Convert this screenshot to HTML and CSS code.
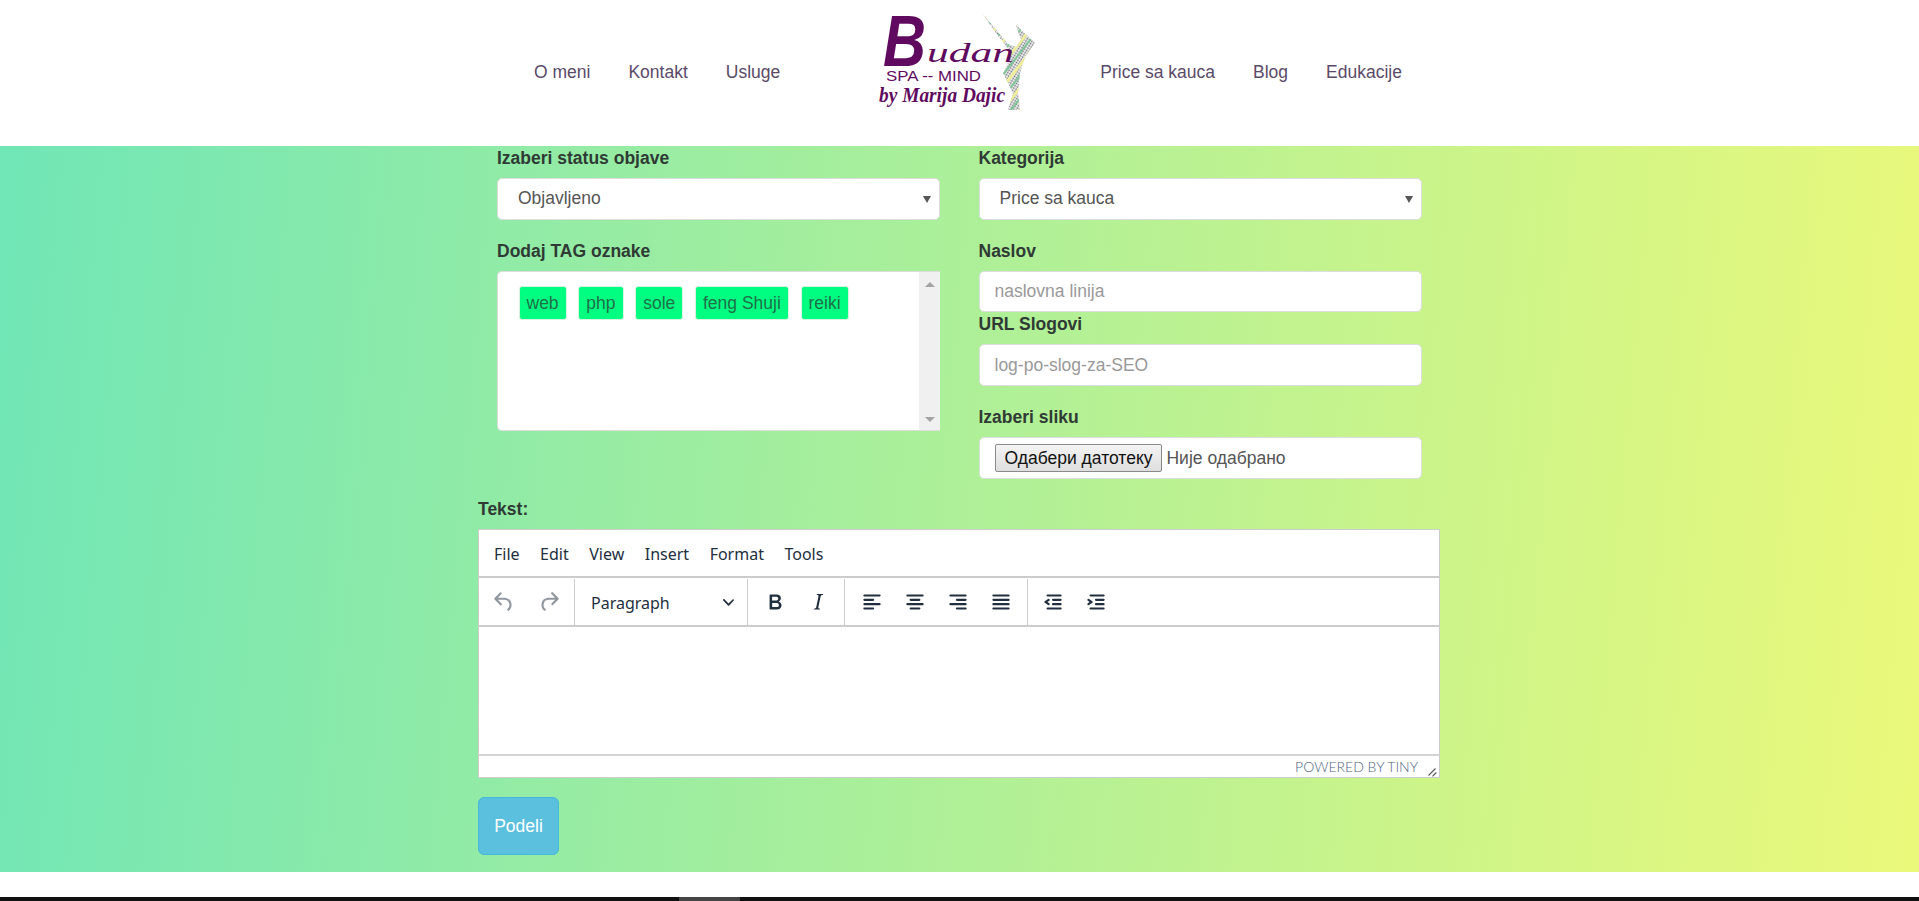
FILE: index.html
```html
<!DOCTYPE html>
<html>
<head>
  <meta charset="utf-8">
  <title>Budan - Nova objava</title>
  <meta content="width=device-width, initial-scale=1" name="viewport">
  <link rel="stylesheet" href="styles.css">
</head>
<body>
  <!-- Header -->
  <header class="site-header">
    <nav class="nav-group">
      <a href="#">O meni</a>
      <a href="#">Kontakt</a>
      <a href="#">Usluge</a>
    </nav>
    <a class="logo" href="#">
      <svg width="240" height="125" viewBox="0 0 240 125">
        <defs>
          <pattern id="dots" width="2.6" height="2.6" patternUnits="userSpaceOnUse" patternTransform="rotate(30)">
            <rect width="2.6" height="2.6" fill="#f4f4f0"></rect>
            <circle cx="1.3" cy="1.3" r="0.85" fill="#6a6c7c"></circle>
          </pattern>
          <pattern id="bands" width="14" height="14" patternUnits="userSpaceOnUse" patternTransform="rotate(-52)">
            <rect width="14" height="3" fill="#f0ee9a"></rect>
            <rect y="7" width="14" height="2" fill="#7fc79a"></rect>
          </pattern>
        </defs>
        <path class="dancer" d="M144 13L158 33L173 52L170 63L165 73L175 93L170 110L182 110L180 93L182 73L187 57L197 43L178 25L183 40L178 47L170 44L160 32Z" fill="url(#dots)"></path>
        <path class="dancer" d="M144 13L158 33L173 52L170 63L165 73L175 93L170 110L182 110L180 93L182 73L187 57L197 43L178 25L183 40L178 47L170 44L160 32Z" fill="url(#bands)"></path>
        <text class="logo-b" x="45" y="66" textLength="43" lengthAdjust="spacingAndGlyphs">B</text>
        <text class="logo-udan" x="89" y="62" textLength="87" lengthAdjust="spacingAndGlyphs">udan</text>
        <text class="logo-spa" x="48" y="81" textLength="95" lengthAdjust="spacingAndGlyphs">SPA -- MIND</text>
        <text class="logo-by" x="41" y="102" textLength="126" lengthAdjust="spacingAndGlyphs">by Marija Dajic</text>
      </svg>
    </a>
    <nav class="nav-group">
      <a href="#">Price sa kauca</a>
      <a href="#">Blog</a>
      <a href="#">Edukacije</a>
    </nav>
  </header>

  <!-- Post form -->
  <main class="page">
    <form class="post-form">
      <div class="form-cols">
        <div class="col">
          <label class="field-label">Izaberi status objave</label>
          <div class="control select-box">Objavljeno</div>
          <label class="field-label">Dodaj TAG oznake</label>
          <div class="tag-box">
            <div class="tag-list">
              <span class="tag">web</span>
              <span class="tag">php</span>
              <span class="tag">sole</span>
              <span class="tag">feng Shuji</span>
              <span class="tag">reiki</span>
            </div>
            <div class="scroll-track">
              <span class="scroll-up"></span>
              <span class="scroll-down"></span>
            </div>
          </div>
        </div>
        <div class="col">
          <label class="field-label">Kategorija</label>
          <div class="control select-box">Price sa kauca</div>
          <label class="field-label">Naslov</label>
          <input class="control text-input tight" type="text" placeholder="naslovna linija">
          <label class="field-label">URL Slogovi</label>
          <input class="control text-input" type="text" placeholder="log-po-slog-za-SEO">
          <label class="field-label">Izaberi sliku</label>
          <div class="control file-box">
            <button class="file-btn" type="button">Одабери датотеку</button>
            <span>Није одабрано</span>
          </div>
        </div>
      </div>

      <label class="field-label">Tekst:</label>
      <div class="editor">
        <div class="menu-bar">
          <span>File</span>
          <span>Edit</span>
          <span>View</span>
          <span>Insert</span>
          <span>Format</span>
          <span>Tools</span>
        </div>
        <div class="tool-bar">
          <div class="tb-group tb-history">
            <span class="tool disabled"><svg width="26" height="26" viewBox="0 0 24 24"><path d="M6.4 8H12c3.7 0 6.2 2 6.8 5.1.6 2.7-.4 5.6-2.3 6.8a1 1 0 0 1-1-1.8c1.1-.6 1.8-2.7 1.4-4.6-.5-2.1-2.1-3.500-4.900-3.500H6.400l3.300 3.300a1 1 0 1 1-1.400 1.400l-5-5a1 1 0 0 1 0-1.400l5-5a1 1 0 0 1 1.400 1.400L6.400 8z"></path></svg></span>
            <span class="tool disabled"><svg width="26" height="26" viewBox="0 0 24 24"><path d="M17.600 10H12c-2.800 0-4.400 1.400-4.900 3.500-.4 2 .3 4 1.400 4.600a1 1 0 1 1-1 1.800c-2-1.200-2.900-4.100-2.300-6.800.6-3 3-5.100 6.800-5.100h5.600l-3.300-3.300a1 1 0 1 1 1.400-1.400l5 5a1 1 0 0 1 0 1.400l-5 5a1 1 0 0 1-1.400-1.400l3.300-3.300z"></path></svg></span>
          </div>
          <div class="tb-group tb-format">
            <span class="format-name">Paragraph</span>
            <svg width="11" height="11" viewBox="0 0 10 10"><path d="M8.700 2.200c.3-.3.8-.3 1 0 .4.2.4.7 0 1L5.700 7.800c-.3.3-.9.3-1.200 0L.2 3.200c-.3-.3-.3-.8 0-1.100.3-.2.8-.3 1.100 0L5 6l3.700-3.800z"></path></svg>
          </div>
          <div class="tb-group">
            <span class="tool"><svg width="26" height="26" viewBox="0 0 24 24"><path fill-rule="evenodd" d="M7.800 19c-.3 0-.5 0-.6-.2l-.2-.5V5.700c0-.2 0-.4.2-.5l.6-.2h5c1.500 0 2.700.3 3.500 1 .7.6 1.100 1.400 1.100 2.500a3 3 0 0 1-.6 1.900c-.4.6-1 1-1.600 1.200.4.1.9.3 1.300.6s.8.7 1 1.200c.4.4.5 1 .5 1.600 0 1.300-.4 2.300-1.300 3-.8.7-2.100 1-3.800 1H7.800zm5-8.300c.6 0 1.200-.1 1.600-.5.4-.3.6-.7.6-1.300 0-1.100-.8-1.700-2.300-1.700H9.300v3.500h3.500zm.5 6c.7 0 1.300-.1 1.700-.4.4-.4.6-.9.6-1.500s-.2-1-.7-1.400c-.4-.3-1-.4-2-.4H9.400v3.700h3.900z"></path></svg></span>
            <span class="tool"><svg width="26" height="26" viewBox="0 0 24 24"><path d="M16.700 4.700l-.1.900h-.3c-.6 0-1 0-1.400.3-.3.3-.4.6-.5 1.100l-2.100 9.800v.6c0 .5.4.8 1.400.8h.2l-.2.8H8l.2-.8h.2c1.100 0 1.800-.5 2-1.500l2-9.800.1-.5c0-.6-.4-.8-1.400-.8h-.3l.2-.9h5.800z"></path></svg></span>
          </div>
          <div class="tb-group">
            <span class="tool"><svg width="26" height="26" viewBox="0 0 24 24"><path d="M5 5h14a1 1 0 0 1 0 2H5a1 1 0 1 1 0-2zm0 4h8a1 1 0 0 1 0 2H5a1 1 0 1 1 0-2zm0 8h8a1 1 0 0 1 0 2H5a1 1 0 0 1 0-2zm0-4h14a1 1 0 0 1 0 2H5a1 1 0 0 1 0-2z"></path></svg></span>
            <span class="tool"><svg width="26" height="26" viewBox="0 0 24 24"><path d="M5 5h14a1 1 0 0 1 0 2H5a1 1 0 1 1 0-2zm3 4h8a1 1 0 0 1 0 2H8a1 1 0 1 1 0-2zm0 8h8a1 1 0 0 1 0 2H8a1 1 0 0 1 0-2zm-3-4h14a1 1 0 0 1 0 2H5a1 1 0 0 1 0-2z"></path></svg></span>
            <span class="tool"><svg width="26" height="26" viewBox="0 0 24 24"><path d="M5 5h14a1 1 0 0 1 0 2H5a1 1 0 1 1 0-2zm6 4h8a1 1 0 0 1 0 2h-8a1 1 0 0 1 0-2zm0 8h8a1 1 0 0 1 0 2h-8a1 1 0 0 1 0-2zm-6-4h14a1 1 0 0 1 0 2H5a1 1 0 0 1 0-2z"></path></svg></span>
            <span class="tool"><svg width="26" height="26" viewBox="0 0 24 24"><path d="M5 5h14a1 1 0 0 1 0 2H5a1 1 0 1 1 0-2zm0 4h14a1 1 0 0 1 0 2H5a1 1 0 1 1 0-2zm0 4h14a1 1 0 0 1 0 2H5a1 1 0 0 1 0-2zm0 4h14a1 1 0 0 1 0 2H5a1 1 0 0 1 0-2z"></path></svg></span>
          </div>
          <div class="tb-group">
            <span class="tool"><svg width="26" height="26" viewBox="0 0 24 24"><path d="M7 5h12a1 1 0 0 1 0 2H7a1 1 0 1 1 0-2zm5 4h7a1 1 0 0 1 0 2h-7a1 1 0 0 1 0-2zm0 4h7a1 1 0 0 1 0 2h-7a1 1 0 0 1 0-2zm-5 4h12a1 1 0 0 1 0 2H7a1 1 0 0 1 0-2zm1.600-3.800a1 1 0 0 1-1.200 1.600l-3-2a1 1 0 0 1 0-1.600l3-2a1 1 0 0 1 1.200 1.600L6.800 12l1.800 1.200z"></path></svg></span>
            <span class="tool"><svg width="26" height="26" viewBox="0 0 24 24"><path d="M7 5h12a1 1 0 0 1 0 2H7a1 1 0 1 1 0-2zm5 4h7a1 1 0 0 1 0 2h-7a1 1 0 0 1 0-2zm0 4h7a1 1 0 0 1 0 2h-7a1 1 0 0 1 0-2zm-5 4h12a1 1 0 0 1 0 2H7a1 1 0 0 1 0-2zm-2.600-3.800L6.200 12l-1.800-1.200a1 1 0 0 1 1.200-1.600l3 2a1 1 0 0 1 0 1.600l-3 2a1 1 0 1 1-1.200-1.600z"></path></svg></span>
          </div>
        </div>
        <div class="edit-area"></div>
        <div class="status-bar">
          <span class="branding">POWERED BY TINY</span>
          <svg width="10" height="10" viewBox="0 0 10 10"><path d="M8.100 1.100l-7 7 .8.8 7-7zM8.900 5.100l-3.800 3.800.8.800 3.800-3.800z"></path></svg>
        </div>
      </div>

      <button class="share-btn" type="button">Podeli</button>
    </form>
  </main>

  <div class="page-end"></div>
  <div class="bottom-bar"><span class="bottom-thumb"></span></div>
</body>
</html>
```

FILE: styles.css
```css
/* Budan blog form */
body {
  font-family: 'Liberation Sans', Arial, sans-serif;
  font-size: 17.5px;
  margin: 0;
  background: #ffffff;
  color: #333333;
}

/* header */
.site-header {
  display: flex;
  justify-content: center;
  align-items: center;
  height: 146px;
  padding-left: 17px;
}
.nav-group {
  display: flex;
  padding-bottom: 1px;
}
.nav-group a {
  padding: 0 19px;
  font-size: 17.5px;
  color: #5a4a68;
  text-decoration: none;
}
.logo {
  align-self: flex-start;
  margin: 0 3px 0 39px;
}
.logo svg {
  display: block;
}
.logo text {
  fill: #5f0a5f;
}
.logo-b {
  font: italic bold 72px 'Liberation Sans', sans-serif;
}
.logo-udan {
  font: italic 27px 'Liberation Serif', serif;
}
.logo-spa {
  font: 15px 'Liberation Sans', sans-serif;
}
.logo-by {
  font: italic bold 20px 'Liberation Serif', serif;
}

/* page */
.page {
  box-sizing: border-box;
  height: 726px;
  padding-right: 1px;
  background: linear-gradient(95deg, #70e6b6, #ebf97a);
}
.post-form {
  width: 962px;
  margin: 0 auto;
}
.form-cols {
  display: grid;
  grid-template-columns: 443px 443px;
  gap: 38.5px;
  padding-left: 19px;
}
.field-label {
  display: block;
  height: 22px;
  line-height: 22px;
  margin-bottom: 9px;
  font-weight: bold;
  color: #2f3a35;
}
.col .field-label:first-child {
  padding-top: 1px;
}
.control {
  display: block;
  box-sizing: border-box;
  width: 100%;
  height: 42px;
  margin-bottom: 20px;
  background: #ffffff;
  border: 1px solid #dddddd;
  border-radius: 5px;
  font: 17.5px 'Liberation Sans', Arial, sans-serif;
  color: #555555;
}
.select-box {
  position: relative;
  padding-left: 20px;
  line-height: 39px;
}
.select-box::after {
  content: "";
  position: absolute;
  right: 8px;
  top: 17px;
  border-left: 4px solid transparent;
  border-right: 4px solid transparent;
  border-top: 7px solid #555555;
}
.text-input {
  padding: 0 15px;
}
.text-input.tight {
  margin-bottom: 1px;
  height: 41px;
}
.text-input::placeholder {
  color: #999999;
}
.file-box {
  display: flex;
  align-items: center;
  gap: 4px;
  padding-left: 15px;
  margin-bottom: 19px;
}
.file-btn {
  height: 28px;
  padding: 0 9px;
  font: 17.5px 'Liberation Sans', Arial, sans-serif;
  color: #111111;
  background: linear-gradient(#f4f4f4, #dedede);
  border: 1px solid #8a8a8a;
  border-radius: 2px;
}

/* tags */
.tag-box {
  display: flex;
  height: 160px;
  background: #ffffff;
  border: 1px solid #dddddd;
  border-right: none;
  border-radius: 5px 0 0 5px;
  box-sizing: border-box;
}
.tag-list {
  flex: 1;
  display: flex;
  align-items: flex-start;
  gap: 11.7px;
  padding: 14px 0 0 20.5px;
}
.tag {
  height: 32px;
  line-height: 32px;
  padding: 0 7px;
  background: #00ff80;
  border: 1px solid #d9f3e2;
  border-radius: 3px;
  color: #1f6f4a;
}
.scroll-track {
  display: flex;
  flex-direction: column;
  justify-content: space-between;
  align-items: center;
  width: 21px;
  padding: 10px 0 8px;
  box-sizing: border-box;
  background: #f0f0f0;
}
.scroll-up {
  border-left: 5px solid transparent;
  border-right: 5px solid transparent;
  border-bottom: 5px solid #a3a3a3;
}
.scroll-down {
  border-left: 5px solid transparent;
  border-right: 5px solid transparent;
  border-top: 5px solid #a3a3a3;
}

/* editor */
.editor {
  box-sizing: border-box;
  height: 249px;
  background: #ffffff;
  border: 1px solid #cccccc;
  font-family: 'Noto Sans', sans-serif;
  font-size: 16px;
  color: #222f3e;
}
.editor svg {
  fill: #222f3e;
  display: block;
}
.menu-bar {
  display: flex;
  align-items: center;
  gap: 20.5px;
  height: 48px;
  padding: 1px 0 0 15px;
  border-bottom: 2px solid #cccccc;
  box-sizing: border-box;
}
.tool-bar {
  display: flex;
  height: 49px;
  padding-top: 1px;
  box-sizing: border-box;
  border-bottom: 2px solid #cccccc;
}
.tb-group {
  display: flex;
  align-items: center;
  padding: 0 5px;
  border-right: 1px solid #cccccc;
}
.tb-group:last-child {
  border-right: none;
  padding-left: 3px;
}
.tool {
  display: flex;
  justify-content: center;
  width: 43px;
}
.tool.disabled svg {
  fill: rgba(34, 47, 62, 0.5);
}
.tb-history {
  padding: 0 3px 0 2px;
}
.tb-history .tool {
  width: 45px;
}
.tb-format {
  justify-content: space-between;
  width: 173px;
  box-sizing: border-box;
  padding: 0 13px 0 16px;
}
.format-name {
  margin-top: 2px;
}
.edit-area {
  height: 129px;
  border-bottom: 2px solid #d4d4d4;
  box-sizing: border-box;
}
.status-bar {
  display: flex;
  justify-content: flex-end;
  align-items: center;
  gap: 9px;
  height: 21px;
  padding-right: 2px;
}
.branding {
  font-family: Lato, sans-serif;
  font-weight: 300;
  font-size: 14px;
  color: #4f6480;
}
.status-bar svg {
  align-self: flex-end;
  fill: #555555;
}

.share-btn {
  display: block;
  width: 81px;
  height: 58px;
  margin-top: 19px;
  background: #5bc0de;
  border: 1px solid #46b8da;
  border-radius: 6px;
  color: #ffffff;
  font: 17.5px 'Liberation Sans', Arial, sans-serif;
}

/* bottom of page */
.page-end {
  height: 25px;
}
.bottom-bar {
  display: flex;
  height: 4px;
  background: #111111;
}
.bottom-thumb {
  width: 61px;
  margin-left: 679px;
  background: #444444;
}
```
